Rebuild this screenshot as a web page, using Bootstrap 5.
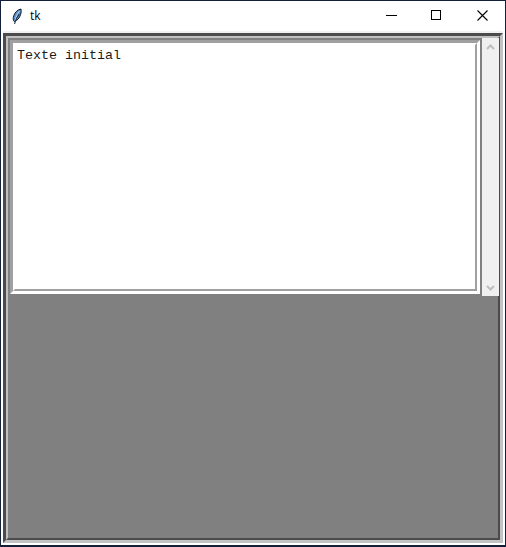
<!DOCTYPE html>
<html lang="fr">
<head>
<meta charset="utf-8">
<title>tk</title>
<link href="https://cdn.jsdelivr.net/npm/bootstrap@5.3.0/dist/css/bootstrap.min.css" rel="stylesheet">
<script src="https://cdn.jsdelivr.net/npm/bootstrap@5.3.0/dist/js/bootstrap.bundle.min.js"></script>
<style>
body{background:#14203a;height:547px;font-family:"Open Sans","Noto Sans",sans-serif}
.tk-window{height:547px;padding:0 2px 2px;border:solid #14203a;border-width:1px 1px 2px;background:#fff}
.tk-title{height:30px;font-size:12px;color:#000}
.tk-title svg{display:block}
.title-label{padding-left:7px}
.title-buttons{margin-right:-2px}
.tk-strip{height:2px;background:#f0f0f0}
.groove-outer{height:510px;border:3px solid;border-color:#4b4b4b #c3c3c3 #c3c3c3 #4b4b4b}
.groove-inner{height:504px;border:2px solid;border-color:#c0c0c0 #4b4b4b #4b4b4b #c0c0c0;background:#808080}
.text-shell{width:474px;height:258px;padding:2px;background:#808080}
.text-outer{height:254px;border:3px solid;border-color:#a0a0a0 #fff #fff #a0a0a0}
.text-inner{height:248px;border:2px solid;border-color:#fff #a0a0a0 #a0a0a0 #fff;background:#fff}
.text-field{width:100%;height:100%;padding:3px 2px;border:0;outline:0;resize:none;overflow:hidden;display:block;font:13.33px/16px "Liberation Mono",monospace;color:#1a1a1a;background:#fff}
.scroll-track{width:17px;height:258px;background:#f0f0f0;padding:5px 0 4px}
.win-btn{width:46px;height:30px}
</style>
</head>
<body class="m-0 overflow-hidden">
<div class="tk-window">
  <header class="tk-title d-flex align-items-center">
    <svg class="ms-2" width="12" height="17" viewBox="0 0 12 17"><path d="M10 1C7 1.500 4 4 2.800 7.500c-.8 2.400-.8 4.500.3 5.900C6 13 8.600 10 9.600 6.500c.6-2 .8-3.700.4-5.500Z" fill="#5d8fc4" stroke="#111a26"/><path d="M8.500 3C6 6 4.800 9 4 13" fill="none" stroke="#b9d6f2"/><path d="M8.300 6C6.500 9 4.500 11 3.600 16" fill="none" stroke="#15202e"/></svg>
    <span class="title-label">tk</span>
    <div class="title-buttons d-flex ms-auto">
      <div class="win-btn"><svg width="46" height="30"><path d="M19 14.500h11" stroke="#000" shape-rendering="crispEdges"/></svg></div>
      <div class="win-btn"><svg width="46" height="30"><rect x="18.500" y="9.500" width="9" height="9" fill="none" stroke="#000" shape-rendering="crispEdges"/></svg></div>
      <div class="win-btn"><svg width="46" height="30"><path d="M18.500 9.500l10 10m0-10l-10 10" stroke="#000" stroke-width="1.100"/></svg></div>
    </div>
  </header>
  <div class="tk-strip"></div>
  <main class="groove-outer">
    <div class="groove-inner d-flex align-items-start">
      <div class="text-shell flex-shrink-0"><div class="text-outer"><div class="text-inner"><textarea class="text-field" spellcheck="false">Texte initial</textarea></div></div></div>
      <div class="scroll-track flex-shrink-0 d-flex flex-column justify-content-between align-items-center">
        <svg width="9" height="8" viewBox="0 0 9 8"><path d="M1 6l3.500-3.500L8 6" fill="none" stroke="#bfbfbf" stroke-width="2"/></svg>
        <svg width="9" height="8" viewBox="0 0 9 8"><path d="M1 2l3.500 3.500L8 2" fill="none" stroke="#bfbfbf" stroke-width="2"/></svg>
      </div>
    </div>
  </main>
</div>
</body>
</html>
